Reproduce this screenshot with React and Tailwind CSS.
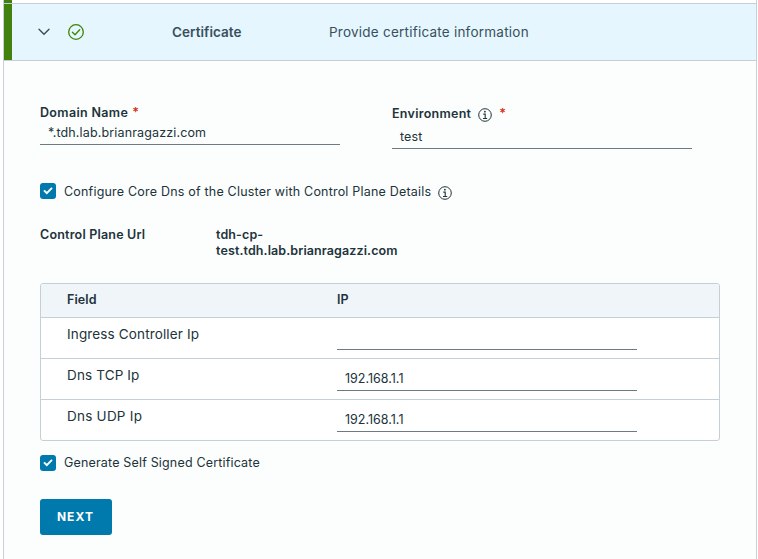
function CheckCircle() {
  return (
    <svg width="16" height="16" viewBox="0 0 16 16" fill="none" stroke="#3c8500" strokeWidth="1.3">
      <circle cx="8" cy="8" r="7.3" />
      <path d="M4.4 8.3 7 10.8 11.7 5.8" strokeLinecap="round" strokeLinejoin="round" />
    </svg>
  );
}

function Info() {
  return (
    <svg width="14" height="14" viewBox="0 0 14 14" fill="none" stroke="#21333b" className="shrink-0">
      <circle cx="7" cy="7" r="6.3" strokeWidth="1" />
      <circle cx="6.9" cy="3.7" r="0.9" fill="#21333b" stroke="none" />
      <path d="M5.3 6.1H7.2V10.4M5 10.5H9.2" strokeWidth="1.1" />
    </svg>
  );
}

function Checkbox() {
  return (
    <span className="flex size-4 shrink-0 items-center justify-center rounded-[3px] bg-[#0079ad]">
      <svg width="16" height="16" viewBox="0 0 16 16" fill="none" stroke="#fff" strokeWidth="2">
        <path d="M4 7.4 6.8 10.1 12 4.9" />
      </svg>
    </span>
  );
}

const rows = [
  { field: "Ingress Controller Ip", ip: "", track: "tracking-[0.14px]" },
  { field: "Dns TCP Ip", ip: "192.168.1.1", track: "tracking-[0.14px]" },
  { field: "Dns UDP Ip", ip: "192.168.1.1", track: "tracking-[0.24px]" },
];

export default function App() {
  return (
    <div className="h-[559px] w-[758px] overflow-hidden bg-white pl-[3px] pr-px font-['Inter',sans-serif] text-[12.5px] leading-4 text-[#21333b]">
      <div className="flex h-full flex-col border-x border-[#c8d1d8] bg-[#fcfefd]">
        <div className="h-[3px] shrink-0 border-l-8 border-[#42810e] bg-white" />
        <header className="h-[58px] shrink-0 border-y border-[#c5d0d6] bg-[#e5f6ff]">
          <div className="flex h-full items-center border-l-8 border-[#42810e] text-[13.5px] text-[#38505b]">
            <svg width="12" height="8" viewBox="0 0 12 8" fill="none" stroke="#38505b" strokeWidth="1.4" className="ml-[26px]">
              <path d="M1 1.2 6 6.2 11 1.2" strokeLinecap="round" />
            </svg>
            <span className="ml-[18px]"><CheckCircle /></span>
            <span className="ml-[88px] w-[157px] font-semibold tracking-[0.04px]">Certificate</span>
            <span className="tracking-[0.23px]">Provide certificate information</span>
          </div>
        </header>

        <main className="flex flex-col pl-9 pr-9">
          <div className="mt-11 flex gap-[52px]">
            <label className="block w-[300px]">
              <span className="flex font-semibold"><span className="tracking-[0.34px]">Domain Name</span><span className="ml-1 text-[#d92a0f]">*</span></span>
              <span className="flex h-6 border-b border-[#6a7b83] pl-2 pt-1 tracking-[0.14px]">*.tdh.lab.brianragazzi.com</span>
            </label>
            <label className="block w-[300px]">
              <span className="flex items-center font-semibold">
                <span className="tracking-[0.27px]">Environment</span>
                <span className="ml-[7px] mt-[3px]"><Info /></span>
                <span className="ml-[7px] text-[#d92a0f]">*</span>
              </span>
              <span className="flex h-[27px] border-b border-[#6a7b83] pl-2 pt-[7px] tracking-[0.14px]">test</span>
            </label>
          </div>

          <div className="mt-[34px] flex h-4 items-center">
            <Checkbox />
            <span className="ml-2 mt-[2px] tracking-[0.2px]">Configure Core Dns of the Cluster with Control Plane Details</span>
            <span className="ml-[7px] mt-[4px]"><Info /></span>
          </div>

          <div className="mt-7 flex font-semibold">
            <span className="w-44 tracking-[0.2px]">Control Plane Url</span>
            <span className="w-[190px] tracking-[0.11px]">tdh-cp-<br />test.tdh.lab.brianragazzi.com</span>
          </div>

          <div className="mt-6 w-[680px] overflow-hidden rounded-[3px] border border-[#c5d0d6] bg-white">
            <div className="flex h-[33px] items-center bg-[#f0f5f9] pb-[2px] pl-[26px] font-semibold">
              <span className="w-[270px] tracking-[0.1px]">Field</span>
              <span>IP</span>
            </div>
            {rows.map((r) => (
              <div key={r.field} className="flex h-[41px] border-t border-[#c5d0d6] pl-[26px]">
                <span className="w-[270px] pt-2 text-[13.5px]"><span className={r.track}>{r.field}</span></span>
                <span className="mt-2 flex h-6 w-[300px] border-b border-[#6a7b83] pl-2 pt-1">{r.ip}</span>
              </div>
            ))}
          </div>

          <div className="mt-[14px] flex h-4 items-center">
            <Checkbox />
            <span className="ml-2 tracking-[0.17px]">Generate Self Signed Certificate</span>
          </div>
          <button className="mt-7 h-9 w-[72px] rounded-[3px] bg-[#0079ad] pr-px text-[12px] font-bold tracking-[1.1px] text-white">NEXT</button>
        </main>
      </div>
    </div>
  );
}
